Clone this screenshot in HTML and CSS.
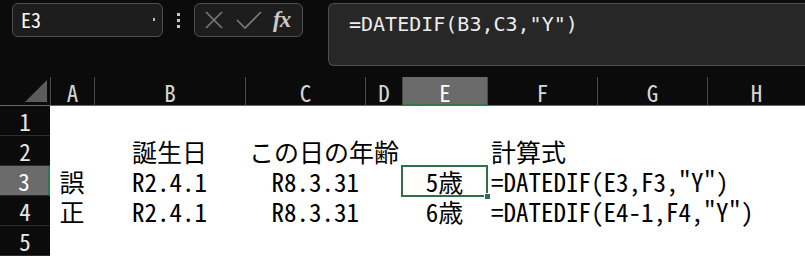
FILE: index.html
```html
<!DOCTYPE html>
<html lang="ja">
<head>
    <meta charset="UTF-8">
    <title>DATEDIF</title>
    <link rel="stylesheet" href="styles.css">
</head>
<body>
    <div class="toolbar">
        <div class="namebox">
            <span class="ref">E3</span>
            <span class="drop"></span>
        </div>
        <div class="grip"><i></i><i></i><i></i></div>
        <div class="fxbox">
            <svg class="ico" width="20" height="20" viewBox="0 0 20 20"><path d="M2 2 L18 18 M18 2 L2 18" stroke="#7a7a7a" stroke-width="1.6" fill="none"/></svg>
            <svg class="ico" width="26" height="20" viewBox="0 0 26 20"><path d="M1 10 L9 18 L25 2" stroke="#7a7a7a" stroke-width="1.6" fill="none"/></svg>
            <span class="fx">fx</span>
        </div>
        <div class="formula">=DATEDIF(B3,C3,"Y")</div>
    </div>

    <div class="sheet">
        <div class="hd corner"><span class="tri"></span></div>
        <div class="hd col">A</div>
        <div class="hd col">B</div>
        <div class="hd col">C</div>
        <div class="hd col">D</div>
        <div class="hd col on">E</div>
        <div class="hd col">F</div>
        <div class="hd col">G</div>
        <div class="hd col">H</div>

        <div class="hd row">1</div>
        <div class="c"></div><div class="c"></div><div class="c"></div><div class="c"></div><div class="c"></div><div class="c"></div><div class="c"></div><div class="c"></div>

        <div class="hd row">2</div>
        <div class="c"></div>
        <div class="c mid">誕生日</div>
        <div class="c left">この日の年齢</div>
        <div class="c"></div>
        <div class="c"></div>
        <div class="c left">計算式</div>
        <div class="c"></div><div class="c"></div>

        <div class="hd row on">3</div>
        <div class="c mid">誤</div>
        <div class="c mid">R2.4.1</div>
        <div class="c right">R8.3.31</div>
        <div class="c"></div>
        <div class="c mid sel">5歳</div>
        <div class="c left">=DATEDIF(E3,F3,"Y")</div>
        <div class="c"></div><div class="c"></div>

        <div class="hd row">4</div>
        <div class="c mid">正</div>
        <div class="c mid">R2.4.1</div>
        <div class="c right">R8.3.31</div>
        <div class="c"></div>
        <div class="c mid">6歳</div>
        <div class="c left">=DATEDIF(E4-1,F4,"Y")</div>
        <div class="c"></div><div class="c"></div>

        <div class="hd row">5</div>
        <div class="c"></div><div class="c"></div><div class="c"></div><div class="c"></div><div class="c"></div><div class="c"></div><div class="c"></div><div class="c"></div>
    </div>
</body>
</html>
```

FILE: styles.css
```css
body {
    margin: 0;
    background-color: #0b0b0b;
    overflow: hidden;
    font-family: "Noto Sans CJK JP", sans-serif;
    font-feature-settings: "hwid" 1;
}
.toolbar {
    height: 77px;
    display: flex;
    align-items: flex-start;
    padding-top: 3px;
    box-sizing: border-box;
}
.namebox {
    margin-left: 12px;
    width: 151px;
    height: 34px;
    box-sizing: border-box;
    border: 1px solid #4f4f4f;
    border-radius: 6px;
    background-color: #1d1d1d;
    display: flex;
    align-items: center;
    justify-content: space-between;
    padding: 0 7px 0 8px;
}
.ref {
    color: #ffffff;
    font-size: 20px;
    line-height: 20px;
}
.drop {
    width: 2px;
    height: 3px;
    background-color: #bbbbbb;
    margin-top: -2px;
}
.grip {
    width: 31px;
    height: 34px;
    display: flex;
    flex-direction: column;
    align-items: center;
    justify-content: center;
    gap: 3px;
}
.grip i {
    width: 3px;
    height: 3px;
    background-color: #c8c8c8;
}
.fxbox {
    width: 109px;
    height: 34px;
    box-sizing: border-box;
    border: 1px solid #4f4f4f;
    border-radius: 6px;
    background-color: #1d1d1d;
    display: flex;
    align-items: center;
    padding-left: 9px;
}
.ico {
    margin-right: 12px;
}
.ico + .ico {
    margin-right: 11px;
}
.fx {
    font-family: "Liberation Serif", serif;
    font-style: italic;
    font-weight: bold;
    font-size: 23px;
    color: #c9c9c9;
    letter-spacing: -1px;
}
.formula {
    margin-left: 25px;
    flex: 1;
    height: 63px;
    box-sizing: border-box;
    border: 1px solid #4f4f4f;
    border-right: none;
    border-radius: 6px 0 0 6px;
    background-color: #272727;
    color: #ececec;
    font-family: "DejaVu Sans Mono", monospace;
    font-feature-settings: normal;
    font-size: 20px;
    line-height: 22px;
    padding: 9px 0 0 20px;
}
.sheet {
    display: grid;
    grid-template-columns: 50px 44px 151px 120px 37px 85px 110px 110px 1fr;
    grid-template-rows: 29px repeat(5, 30px);
    background-color: #ffffff;
}
.hd {
    background-color: #0b0b0b;
    color: #d6d6d6;
    font-size: 23px;
    line-height: 28px;
    text-align: center;
    box-sizing: border-box;
}
.col {
    border-left: 1px solid #4a4a4a;
    border-bottom: 1px solid #6a6a6a;
    padding-top: 1px;
}
.col.on {
    background-color: #6b6b6b;
    color: #ffffff;
    border-bottom: 2px solid #2f7a4c;
}
.corner {
    position: relative;
    border-bottom: 1px solid #6a6a6a;
}
.tri {
    position: absolute;
    right: 3px;
    bottom: 3px;
    width: 0;
    height: 0;
    border-style: solid;
    border-width: 0 0 22px 22px;
    border-color: transparent transparent #5c5c5c transparent;
}
.row {
    border-bottom: 1px solid #2c2c2c;
    line-height: 30px;
    color: #e6e6e6;
}
.row.on {
    background-color: #6b6b6b;
    color: #ffffff;
    border-right: 2px solid #2f7a4c;
}
.c {
    font-size: 25px;
    line-height: 30px;
    color: #000000;
    white-space: nowrap;
    box-sizing: border-box;
}
.mid {
    text-align: center;
}
.left {
    padding-left: 4px;
}
.right {
    text-align: right;
    padding-right: 6px;
}
.sel {
    position: relative;
    outline: 2px solid #2f7048;
    outline-offset: -1px;
}
.sel::after {
    content: "";
    position: absolute;
    right: -4px;
    bottom: -4px;
    width: 5px;
    height: 5px;
    background-color: #2f7048;
    border: 1px solid #ffffff;
}
```
